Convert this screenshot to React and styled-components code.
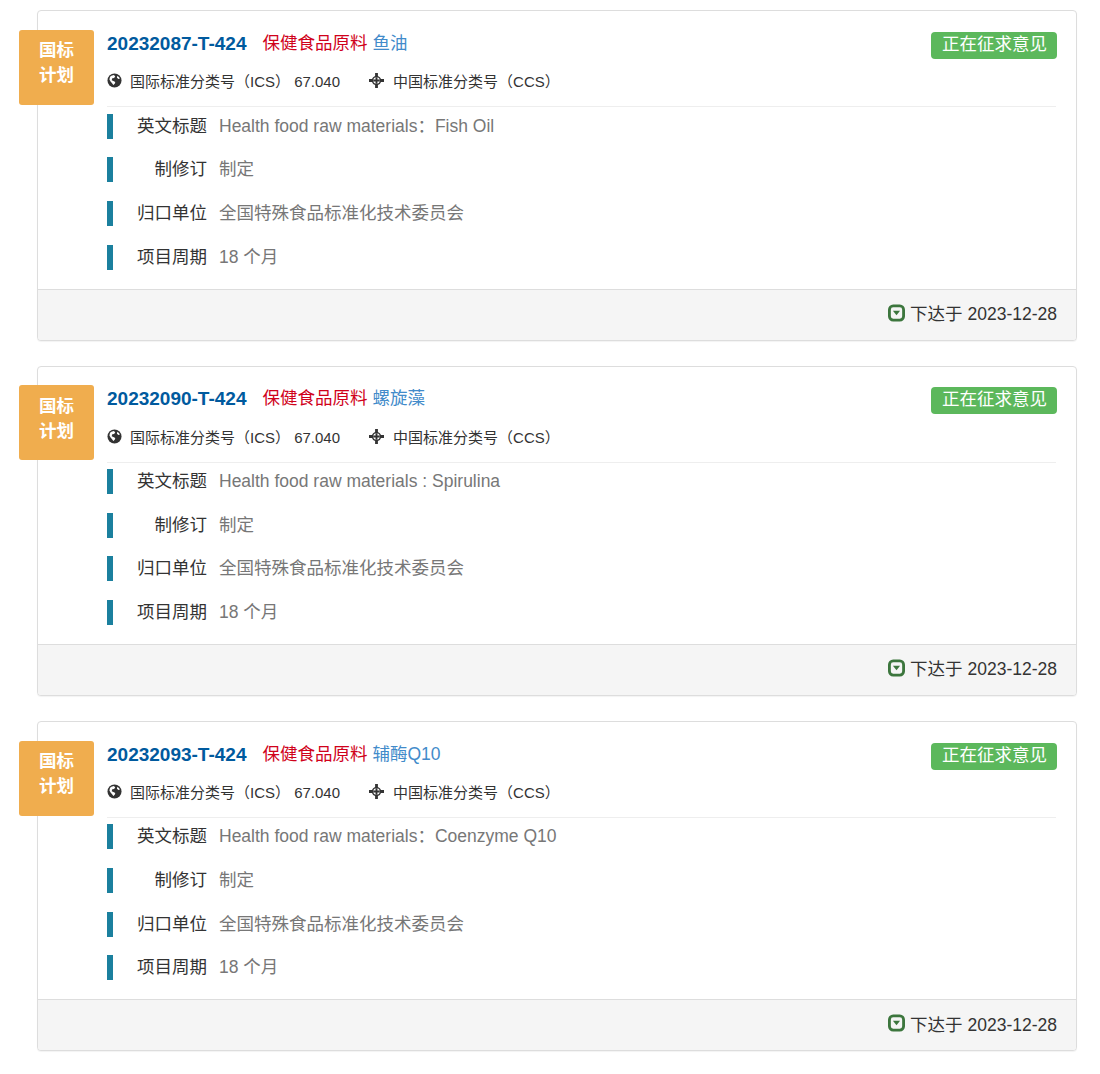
import React from "react"
import styled, { createGlobalStyle } from "styled-components"

const GlobalStyle = createGlobalStyle`
  html, body {
    margin: 0;
    padding: 0;
    background: #fff;
  }
  body {
    font-family: "Liberation Sans", "Noto Sans CJK SC", sans-serif;
    color: #333;
  }
`

const Page = styled.div`
  display: flex;
  flex-direction: column;
  gap: 25.2px;
  padding: 10.4px 23px 23px 37px;
`

const Card = styled.div`
  position: relative;
  border: 1px solid #ddd;
  border-radius: 4px;
  box-shadow: 0 1px 1px rgba(0, 0, 0, 0.05);
  background: #fff;
`

const Ribbon = styled.div`
  position: absolute;
  left: -19px;
  top: 18.6px;
  width: 75px;
  height: 75px;
  box-sizing: border-box;
  padding-bottom: 8px;
  display: flex;
  align-items: center;
  justify-content: center;
  text-align: center;
  background: #f0ad4e;
  border-radius: 3px;
  color: #fff;
  font-size: 17.5px;
  font-weight: bold;
  line-height: 25px;
`

const Body = styled.div`
  padding: 19.6px 20px 18.84px 69px;
`

const TitleRow = styled.div`
  display: flex;
  align-items: center;
  height: 25px;
  font-size: 17.5px;
  line-height: 25px;
`

const Code = styled.span`
  color: #005a9e;
  font-size: 19px;
  font-weight: bold;
  margin-right: 16px;
`

const Category = styled.span`
  color: #d0021b;
  margin-right: 5px;
`

const Product = styled.span`
  color: #428bca;
`

const Status = styled.span`
  margin: 4px -1px 0 auto;
  background: #5cb85c;
  color: #fff;
  border-radius: 4px;
  height: 27px;
  line-height: 25px;
  padding: 0 10px 0 11px;
`

const ClassRow = styled.div`
  display: flex;
  align-items: center;
  gap: 29px;
  height: 25px;
  margin-top: 12.4px;
  font-size: 15px;
  color: #333;
`

const ClassItem = styled.span`
  display: flex;
  align-items: center;
`

const ClassIcon = styled.svg`
  width: 15px;
  height: 15px;
  margin-right: ${(p) => p.$gap}px;
  fill: #333;
`

const Fields = styled.div`
  display: flex;
  flex-direction: column;
  gap: 18.72px;
  margin-top: 13px;
  padding-top: 6.2px;
  border-top: 1px solid #eee;
`

const Field = styled.div`
  display: flex;
  align-items: center;
  height: 25px;
  font-size: 17.5px;
  line-height: 25px;
  border-left: 6px solid #1b809e;
`

const FieldLabel = styled.span`
  width: 94px;
  text-align: right;
  color: #333;
`

const FieldValue = styled.span`
  margin-left: 12px;
  color: #777;
`

const Footer = styled.div`
  display: flex;
  align-items: center;
  justify-content: flex-end;
  box-sizing: border-box;
  height: 51px;
  padding: 0 19px 4px;
  background: #f5f5f5;
  border-top: 1px solid #ddd;
  border-radius: 0 0 3px 3px;
  font-size: 17.5px;
`

const FooterIcon = styled.svg`
  width: 17px;
  height: 18px;
  margin-right: 5px;
`

function GlobeIcon() {
  return (
    <ClassIcon $gap={8} viewBox="0 0 16 16">
      <circle cx="8" cy="8" r="7.5" />
      <path
        fill="#fff"
        d="M4 3.2 7.2 2.2 8.8 3.4 7.6 5.2 5.6 5.6 5 7.6 6.8 8.6 8.8 9.6 8.4 11.2 6.8 12.8 5.4 11 3.8 9 2.6 7 3 4.8Z M11 2.8 13 4.4 13.6 6 12.2 6.4 10.6 5Z"
      />
    </ClassIcon>
  )
}

function TargetIcon() {
  return (
    <ClassIcon $gap={9} viewBox="0 0 16 16">
      <path d="M6.5 0h3v3.2A5 5 0 0 1 12.8 6.5H16v3h-3.2A5 5 0 0 1 9.5 12.8V16h-3v-3.2A5 5 0 0 1 3.2 9.5H0v-3h3.2A5 5 0 0 1 6.5 3.2V0Z" />
      <circle cx="8" cy="8" r="3.4" fill="#fff" />
      <path d="M7 4.6h2v2.4h2.4v2H9v2.4H7V9H4.6V7H7Z" />
    </ClassIcon>
  )
}

function CollapseIcon() {
  return (
    <FooterIcon viewBox="0 0 18 18">
      <rect x="1.5" y="1.5" width="15" height="15" rx="4" fill="none" stroke="#3c763d" strokeWidth="3" />
      <path d="M5.2 6.5h7.6L9 11.5Z" fill="#3c763d" />
    </FooterIcon>
  )
}

const items = [
  { code: "20232087-T-424", product: "鱼油", english: "Health food raw materials：Fish Oil" },
  { code: "20232090-T-424", product: "螺旋藻", english: "Health food raw materials : Spirulina" },
  { code: "20232093-T-424", product: "辅酶Q10", english: "Health food raw materials：Coenzyme Q10" },
]

function PlanCard({ item }) {
  return (
    <Card>
      <Ribbon>
        国标
        <br />
        计划
      </Ribbon>
      <Body>
        <TitleRow>
          <Code>{item.code}</Code>
          <Category>保健食品原料</Category>
          <Product>{item.product}</Product>
          <Status>正在征求意见</Status>
        </TitleRow>
        <ClassRow>
          <ClassItem>
            <GlobeIcon />
            <span>国际标准分类号（ICS） 67.040</span>
          </ClassItem>
          <ClassItem>
            <TargetIcon />
            <span>中国标准分类号（CCS）</span>
          </ClassItem>
        </ClassRow>
        <Fields>
          <Field>
            <FieldLabel>英文标题</FieldLabel>
            <FieldValue>{item.english}</FieldValue>
          </Field>
          <Field>
            <FieldLabel>制修订</FieldLabel>
            <FieldValue>制定</FieldValue>
          </Field>
          <Field>
            <FieldLabel>归口单位</FieldLabel>
            <FieldValue>全国特殊食品标准化技术委员会</FieldValue>
          </Field>
          <Field>
            <FieldLabel>项目周期</FieldLabel>
            <FieldValue>18 个月</FieldValue>
          </Field>
        </Fields>
      </Body>
      <Footer>
        <CollapseIcon />
        下达于 2023-12-28
      </Footer>
    </Card>
  )
}

export default function App() {
  return (
    <Page>
      <GlobalStyle />
      {items.map((item) => (
        <PlanCard key={item.code} item={item} />
      ))}
    </Page>
  )
}
